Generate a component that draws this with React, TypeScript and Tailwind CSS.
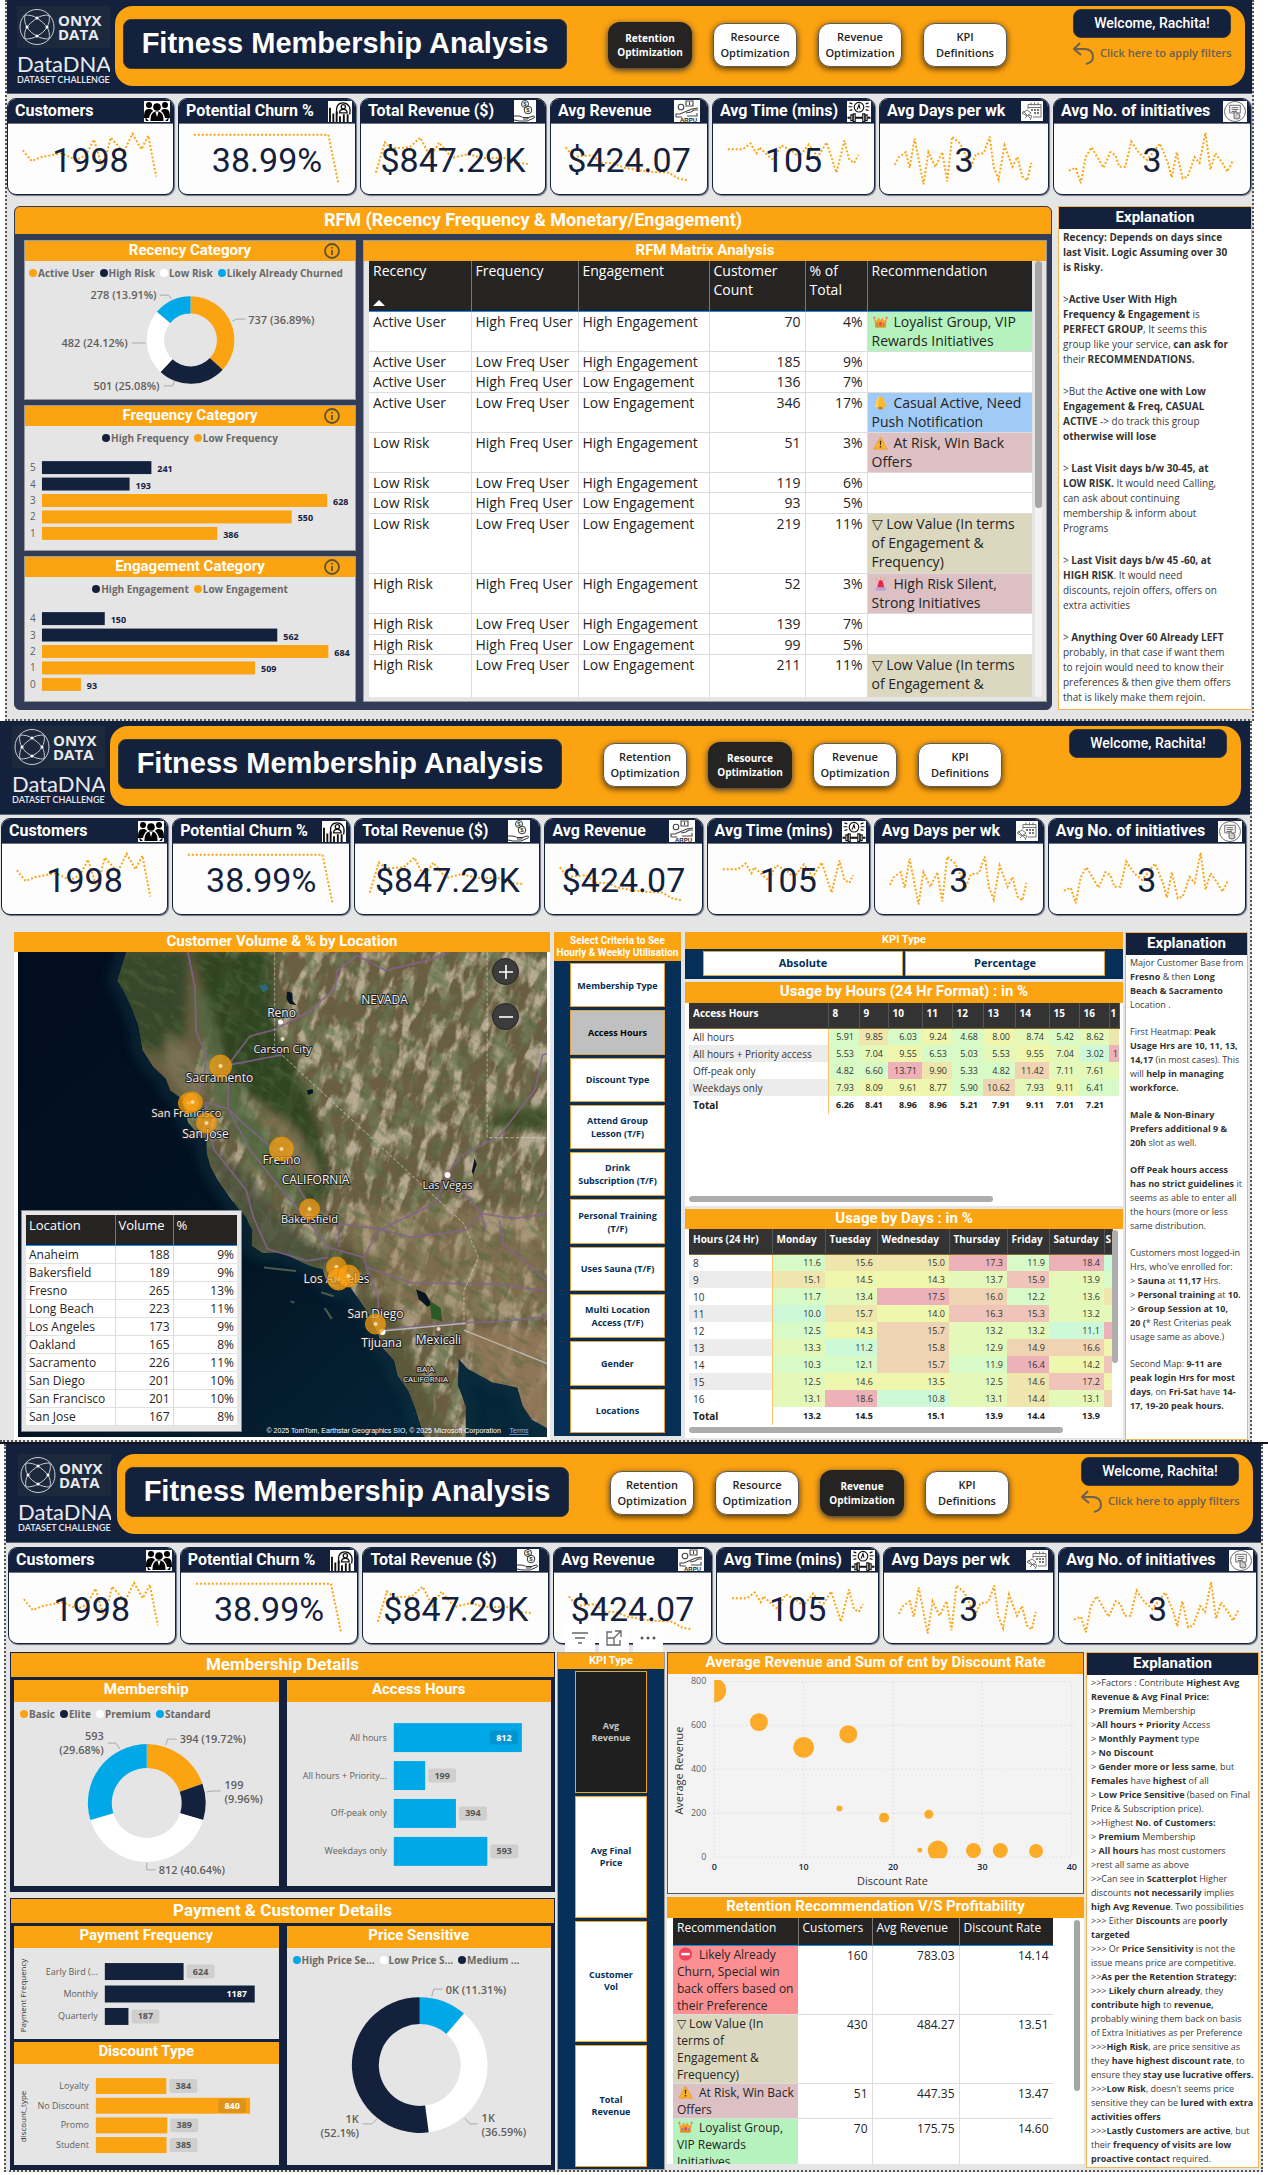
import React from "react";

/* ---------- shared text helpers ---------- */

function Rich({ text }: { text: string }) {
  return (
    <>
      {text.split("**").map((part, i) =>
        i % 2 ? (
          <b key={i} className="font-bold text-[#333]">
            {part}
          </b>
        ) : (
          <React.Fragment key={i}>{part}</React.Fragment>
        )
      )}
    </>
  );
}

function Lines({ blocks, className }: { blocks: string[][]; className: string }) {
  return (
    <div className={"flex flex-col whitespace-nowrap text-[#3a3a3a] " + className}>
      {blocks.map((b, i) => (
        <p key={i}>
          {b.map((l, j) => (
            <React.Fragment key={j}>
              <Rich text={l} />
              <br />
            </React.Fragment>
          ))}
        </p>
      ))}
    </div>
  );
}

function Explanation({ children, className = "" }: { children: React.ReactNode; className?: string }) {
  return (
    <aside className={"overflow-hidden border border-[#f5b553] bg-white " + className}>
      <h3 className="h-[22px] bg-[#14213d] text-center font-[Roboto] text-[15px] leading-[20px] font-bold text-white">
        Explanation
      </h3>
      {children}
    </aside>
  );
}

/* ---------- header ---------- */

function Logo() {
  return (
    <div className="w-[93px] shrink-0 overflow-hidden text-[#e8eaf0]">
      <div className="flex h-[42px] items-center gap-[3px] bg-[#1c283c] pl-[2px]">
        <svg viewBox="0 0 36 38" className="h-[38px] w-9 shrink-0" fill="none" stroke="#c9ced8" strokeWidth="1">
          <ellipse cx="18" cy="19" rx="17" ry="17.5" />
          <path d="M18 10C14 13 10 16 8 19c2 4 6 7 10 9 4-2 8-5 10-9-2-3-6-6-10-9z" />
          <path d="M6 7c5 0 9 1 12 3 3-2 7-3 12-3M6 31c5 0 9-1 12-3 3 2 7 3 12 3M6 7c-1 5 0 9 2 12-2 3-3 7-2 12M30 7c1 5 0 9-2 12 2 3 3 7 2 12" />
          <g fill="#fff" stroke="none">
            <circle cx="18" cy="10" r="1.5" />
            <circle cx="8" cy="19" r="1.5" />
            <circle cx="28" cy="19" r="1.5" />
            <circle cx="18" cy="28" r="1.5" />
          </g>
        </svg>
        <div className="font-['Open_Sans'] text-[15px] font-bold">
          <div className="h-[14px] leading-[14px]">ONYX</div>
          <div className="h-[14px] leading-[14px]">DATA</div>
        </div>
      </div>
      <div className="mt-[6px] font-[Lato] text-[22px] leading-[20px]">DataDNA</div>
      <div className="mt-[1px] font-[Lato] text-[9px] leading-[10px] font-semibold whitespace-nowrap">
        DATASET CHALLENGE
      </div>
    </div>
  );
}

const NAV = [
  ["Retention", "Optimization"],
  ["Resource", "Optimization"],
  ["Revenue", "Optimization"],
  ["KPI", "Definitions"],
];

function Header({
  active,
  filters = false,
  className,
  logoClass,
}: {
  active: number;
  filters?: boolean;
  className: string;
  logoClass: string;
}) {
  return (
    <header className={"flex border-b border-[#5a6478] bg-[#14213d] " + className}>
      <div className={"shrink-0 " + logoClass}>
        <Logo />
      </div>
      <div className="flex h-20 min-w-0 flex-1 rounded-[18px] bg-[#fca311] pl-2">
        <h1 className="mt-[13px] flex h-[50px] w-[444px] shrink-0 items-center justify-center rounded-lg border border-[#3b3a33] bg-[#14213d] font-['Liberation_Sans'] text-[29px] font-bold whitespace-nowrap text-white">
          Fitness Membership Analysis
        </h1>
        <nav className="mt-[16px] ml-[41px] flex gap-[21px]">
          {NAV.map(([a, b], i) => (
            <button
              key={a}
              type="button"
              className={
                i === active
                  ? "h-[46px] w-[84px] rounded-xl bg-[#252423] font-['Open_Sans'] text-[10px] leading-[14px] font-bold text-white shadow-[0_2px_6px_rgba(20,33,61,0.9)]"
                  : "mt-px h-[44px] w-[84px] rounded-xl border border-[#5b5b5b] bg-white font-['Open_Sans'] text-[11px] leading-[16px] font-semibold text-[#252423] shadow-[0_2px_6px_rgba(0,0,0,0.7)]"
              }
            >
              {a}
              <br />
              {b}
            </button>
          ))}
        </nav>
        <div className="mt-[3px] mr-[14px] ml-auto flex w-[158px] flex-col">
          <div className="flex h-[29px] items-center justify-center rounded-lg border border-[#3b3a33] bg-[#14213d] font-[Roboto] text-[14px] font-medium text-white">
            Welcome, Rachita!
          </div>
          {filters && (
            <a
              href="#filters"
              className="mt-[4px] flex items-center gap-[5px] font-['Open_Sans'] text-[11px] font-semibold whitespace-nowrap text-[#6b6252]"
            >
              <svg viewBox="0 0 22 23" className="h-[23px] w-[22px] shrink-0" fill="none" stroke="#6b6252" strokeWidth="2">
                <path d="M7 1 1 7l7 6M1 7h10c6 0 9 3 9 8 0 4-3 6-7 7" />
              </svg>
              Click here to apply filters
            </a>
          )}
        </div>
      </div>
    </header>
  );
}

/* ---------- KPI cards ---------- */

const ICON = "h-[21px] w-[24px] shrink-0 bg-white";

function PeopleIcon() {
  return (
    <svg viewBox="0 0 26 21" className="h-[21px] w-[26px] shrink-0 bg-white" fill="#000">
      <circle cx="13" cy="6" r="3.800" />
      <circle cx="5" cy="4" r="3" />
      <circle cx="21" cy="4" r="3" />
      <path d="M6.500 20c0-7 2-9.500 6.500-9.500S19.500 13 19.500 20z" />
      <path d="M0 17c0-6 1-9 5-9 2 0 3 .5 4 2-2 1.500-3.500 4-4 7zM26 17c0-6-1-9-5-9-2 0-3 .5-4 2 2 1.500 3.500 4 4 7z" />
      <path d="M1 16l4 4H2zM25 16l-4 4h3z" />
      <path d="M11.500 11l1.500 5 1.500-5z" fill="#fff" />
    </svg>
  );
}
function ChurnIcon() {
  return (
    <svg viewBox="0 0 24 22" className={ICON} fill="none" stroke="#111" strokeWidth="1.4">
      <path d="M1.500 7v15M5 13v9M8.500 11v11M12 16v6M16 14v8M20 14v8" strokeWidth="2" />
      <path d="M9 14c-2-8 1-12 6-12s9 4 7 12" />
      <circle cx="15.500" cy="6" r="2.200" />
      <path d="M11.500 12.500c0-5 8-5 8 0z" />
    </svg>
  );
}
function CoinsIcon() {
  return (
    <svg viewBox="0 0 22 22" className="mr-[6px] h-[22px] w-[22px] shrink-0 bg-white" fill="none" stroke="#333" strokeWidth="1">
      <circle cx="11" cy="4" r="3.500" />
      <circle cx="14" cy="10" r="3.800" />
      <g fill="#333" stroke="none" fontFamily="Liberation Sans" fontSize="6" fontWeight="700" textAnchor="middle">
        <text x="11" y="6">$</text>
        <text x="14" y="12">$</text>
      </g>
      <path d="M0 16h4c3 0 4 1.500 6 1.500h3c1.500 0 1.500 1.500 0 1.500H9M13 18l6-2c2 0 2 1.500 1 2l-7 3H5l-5-1" />
    </svg>
  );
}
function ArpuIcon() {
  return (
    <svg viewBox="0 0 26 22" className="mr-[4px] h-[22px] w-[26px] shrink-0 bg-white" fill="none" stroke="#444" strokeWidth="1.1">
      <circle cx="7" cy="7" r="2.800" />
      <path d="M2 17v-3h4l7-3 5-2 6-1M12 13l5-1 3-2h4M12 1h7v5h-7zM15.500 2v3M2 17h6M13 16h10v-3" />
      <text x="6" y="22" fontSize="6" fontFamily="Liberation Sans" fontWeight="700" fill="#222" stroke="none">
        ARPU
      </text>
    </svg>
  );
}
function TimeIcon() {
  return (
    <svg viewBox="0 0 24 22" className={ICON} fill="none" stroke="#111" strokeWidth="1.2">
      <circle cx="12" cy="6.500" r="5" />
      <path d="M10 9l2-5 1 4M2 2l3 1M22 2l-3 1M1 6h4M23 6h-4M2 10l3-1M22 10l-3-1" />
      <path d="M8 17.500h8M0 17.500h3M21 17.500h3" strokeWidth="2" />
      <path d="M3.500 14.500h2v6h-2zM6 13.500h2v8h-2zM16 13.500h2v8h-2zM18.500 14.500h2v6h-2z" />
    </svg>
  );
}
function DaysIcon() {
  return (
    <svg viewBox="0 0 22 20" className="mr-[2px] h-5 w-[22px] shrink-0 bg-white" fill="none" stroke="#777" strokeWidth="1">
      <path d="M7 8V3.500h13V16H12M7 6.500h13M10 1.500v3M13.500 1.500v3M17 1.500v3" />
      <path d="M10 9h2M13 9h2M16 9h2M13 12h2M16 12h2" strokeWidth="2" />
      <path d="M1 12l5-3 4 3-4 3zM4 17l3-3 4 1-2 4M2 10l8 8" />
    </svg>
  );
}
function InitiativeIcon() {
  return (
    <svg viewBox="0 0 24 22" className={ICON} fill="none" stroke="#666" strokeWidth="1">
      <ellipse cx="12" cy="11" rx="11" ry="10.500" />
      <path d="M6.500 4.500h11v8h-11zM8.500 7h7M8.500 9h7M8.500 11h4" />
      <path d="M11 13v5l3 1 3-1v-4l-3-1-1-3z" fill="#ccc" />
    </svg>
  );
}

const CARDS: { title: string; value: string; w: number; pts: string; icon: React.ReactNode }[] = [
  {
    title: "Customers",
    value: "1998",
    w: 167,
    pts: "15,27 24,38 34,34 54,30 69,37 79,32 87,16 96,46 104,14 117,29 126,10 135,26 142,12 150,54",
    icon: <PeopleIcon />,
  },
  { title: "Potential Churn %", value: "38.99%", w: 178, pts: "15,11 151,11 161,60", icon: <ChurnIcon /> },
  {
    title: "Total Revenue ($)",
    value: "$847.29K",
    w: 186,
    pts: "15,50 24,19 31,25 49,24 60,14 70,34 79,19 92,35 108,31 123,35 145,35 155,40 169,41",
    icon: <CoinsIcon />,
  },
  {
    title: "Avg Revenue",
    value: "$424.07",
    w: 158,
    pts: "15,24 23,34 42,32 50,40 62,40 74,45 98,49 119,50 129,56 139,58",
    icon: <ArpuIcon />,
  },
  {
    title: "Avg Time (mins)",
    value: "105",
    w: 163,
    pts: "15,26 30,26 38,20 44,30 47,24 55,32 61,37 69,22 79,27 87,34 97,21 106,34 115,19 125,50 133,17 138,37 143,40 147,32",
    icon: <TimeIcon />,
  },
  {
    title: "Avg Days per wk",
    value: "3",
    w: 170,
    pts: "15,42 19,34 26,29 30,45 35,15 44,62 49,29 56,44 63,29 68,59 73,13 81,20 92,44 97,31 105,30 111,13 115,44 120,57 126,22 134,44 139,34 144,54 149,58 153,40",
    icon: <DaysIcon />,
  },
  {
    title: "Avg No. of initiatives",
    value: "3",
    w: 198,
    pts: "15,48 22,45 27,61 32,34 38,24 50,45 57,29 62,32 66,44 72,44 78,18 86,30 94,37 107,20 115,40 119,55 124,29 130,56 135,54 142,34 147,40 153,9 158,47 163,30 170,40 175,49 181,37",
    icon: <InitiativeIcon />,
  },
];

function KpiRow({ className, toolbar = false }: { className: string; toolbar?: boolean }) {
  return (
    <section
      className={"grid grid-cols-[167fr_178fr_186fr_158fr_163fr_170fr_198fr] gap-1 " + className}
    >
      {CARDS.map((c, i) => (
        <article
          key={c.title}
          className="relative h-[97px] rounded-[9px] border border-[#14213d] bg-[#fdfdfd] shadow-[1px_1px_1px_rgba(20,33,61,0.6)]"
        >
          <div className="flex h-[25px] items-center justify-between rounded-t-[8px] border-b border-[#6d7486] bg-[#14213d] pr-[3px] pl-[7px]">
            <h2 className="font-[Roboto] text-[16px] leading-[22px] font-bold whitespace-nowrap text-white">{c.title}</h2>
            {c.icon}
          </div>
          <div className="grid h-[70px]">
            <svg
              viewBox={`0 0 ${c.w} 72`}
              preserveAspectRatio="none"
              className="h-[70px] w-full [grid-area:1/1]"
              fill="none"
              stroke="#fca311"
              strokeWidth="2"
              strokeDasharray="2 2"
            >
              <polyline points={c.pts} />
            </svg>
            <div className="z-10 text-center font-[Roboto] text-[34px] leading-[72px] whitespace-nowrap text-[#14213d] [grid-area:1/1]">
              {c.value}
            </div>
          </div>
          {toolbar && i === 3 && (
            <div className="absolute top-[76px] left-[11px] z-20 flex gap-1">
              <button type="button" aria-label="Filters" className="flex h-[28px] w-[30px] items-center justify-center bg-white">
                <svg viewBox="0 0 16 12" className="h-3 w-4" stroke="#666" strokeWidth="1.4">
                  <path d="M0 1h16M3 6h10M6 11h4" />
                </svg>
              </button>
              <button type="button" aria-label="Focus mode" className="flex h-[28px] w-[30px] items-center justify-center bg-white">
                <svg viewBox="0 0 16 16" className="h-4 w-4" fill="none" stroke="#666" strokeWidth="1.3">
                  <path d="M6 2H1v13h13v-5M9 1h6v6M15 1 8 8M1 8h7v7" />
                </svg>
              </button>
              <button type="button" aria-label="More options" className="flex h-[28px] w-[30px] items-center justify-center bg-white">
                <svg viewBox="0 0 16 4" className="h-1 w-4" fill="#555">
                  <circle cx="2" cy="2" r="1.500" />
                  <circle cx="8" cy="2" r="1.500" />
                  <circle cx="14" cy="2" r="1.500" />
                </svg>
              </button>
            </div>
          )}
        </article>
      ))}
    </section>
  );
}

/* ---------- chart parts ---------- */

const ORANGE = "#fca311";
const NAVY = "#14213d";
const WHITE = "#ffffff";
const BLUE = "#00a8e8";

function Donut({ cx, cy, r, inner, parts }: { cx: number; cy: number; r: number; inner: number; parts: [number, string][] }) {
  let start = 0;
  return (
    <g>
      {parts.map(([pct, color], i) => {
        const a0 = (start / 100) * Math.PI * 2;
        start += pct;
        const a1 = (start / 100) * Math.PI * 2;
        const p = (a: number, rad: number) => `${cx + rad * Math.sin(a)} ${cy - rad * Math.cos(a)}`;
        const large = pct > 50 ? 1 : 0;
        return (
          <path
            key={i}
            fill={color}
            d={`M${p(a0, r)}A${r} ${r} 0 ${large} 1 ${p(a1, r)}L${p(a1, inner)}A${inner} ${inner} 0 ${large} 0 ${p(a0, inner)}Z`}
          />
        );
      })}
    </g>
  );
}

function Legend({ items, className }: { items: [string, string][]; className: string }) {
  return (
    <ul
      className={
        "flex h-6 items-center gap-[5px] font-['Open_Sans'] text-[10px] font-bold whitespace-nowrap text-[#6b6967] " + className
      }
    >
      {items.map(([label, dot]) => (
        <li key={label} className="flex items-center gap-[1px]">
          <span className={"h-2 w-2 rounded-full " + dot} />
          {label}
        </li>
      ))}
    </ul>
  );
}

function CardTitle({ children, info = false, className = "" }: { children: React.ReactNode; info?: boolean; className?: string }) {
  return (
    <h3 className={"relative bg-[#fca311] text-center font-[Roboto] text-[15px] leading-[19px] font-bold text-white " + className}>
      {children}
      {info && (
        <button type="button" aria-label="Information" className="absolute top-[2px] right-[15px]">
          <svg viewBox="0 0 16 16" className="h-4 w-4" fill="none" stroke="#5d5436" strokeWidth="1.800">
            <circle cx="8" cy="8" r="7" />
            <path d="M8 7v5M8 4v1.600" />
          </svg>
        </button>
      )}
    </h3>
  );
}

function CategoryBars({ rows, scale }: { rows: [string, number, string][]; scale: number }) {
  return (
    <svg viewBox="0 0 331 101" className="h-[101px] w-full" fontFamily="Open Sans" fontSize="10">
      {rows.map(([label, v, color], i) => {
        const y = 11 + i * 16.5;
        return (
          <g key={label}>
            <text x="5" y={y + 10} fill="#605e5c">
              {label}
            </text>
            <rect x="17" y={y} width={v * scale} height="13" fill={color} />
            <text x={17 + v * scale + 6} y={y + 11} fill={NAVY} fontSize="9" fontWeight="700">
              {v}
            </text>
          </g>
        );
      })}
    </svg>
  );
}

function LabelBars({
  rows,
  w,
  h,
  x,
  top,
  pitch,
  bar,
  scale,
  color,
  insideFill,
  axis,
  className,
}: {
  rows: [string, number][];
  w: number;
  h: number;
  x: number;
  top: number;
  pitch: number;
  bar: number;
  scale: number;
  color: string;
  insideFill: string;
  axis?: string;
  className: string;
}) {
  const max = Math.max(...rows.map((r) => r[1]));
  return (
    <svg viewBox={`0 0 ${w} ${h}`} className={"w-full " + className} fontFamily="Open Sans" fontSize="9">
      {axis && (
        <text transform={`translate(12 ${h / 2 + 2}) rotate(-90)`} textAnchor="middle" fontSize="8" fill="#333">
          {axis}
        </text>
      )}
      {rows.map(([label, v], i) => {
        const y = top + i * pitch;
        const end = x + v * scale;
        const inside = v === max;
        const bx = inside ? end - 32 : end + 3;
        const mid = y + bar / 2;
        return (
          <g key={label}>
            <text x={x - 7} y={mid + 3} textAnchor="end" fill="#605e5c">
              {label}
            </text>
            <rect x={x} y={y} width={v * scale} height={bar} fill={color} />
            <rect x={bx} y={mid - 7} width="28" height="14" rx="2" fill={inside ? insideFill : "#d0cfce"} />
            <text x={bx + 14} y={mid + 3} textAnchor="middle" fontWeight="700" fill={inside ? "#fff" : "#555"}>
              {v}
            </text>
          </g>
        );
      })}
    </svg>
  );
}

/* ---------- small pictograms in the recommendation cells ---------- */

const PIC = "mr-[6px] ml-[1px] inline-block h-[14px] w-[15px] align-[-2px]";

function Crown() {
  return (
    <svg viewBox="0 0 16 14" className={PIC}>
      <path d="M1 3l3 3 2-4 2 3 2-3 2 4 3-3-1.500 9h-11z" fill="#f4a02c" />
      <path d="M2.500 10h11v3h-11z" fill="#e58a1f" />
      <circle cx="8" cy="8.500" r="1.600" fill="#e8415a" />
      <circle cx="4.500" cy="9" r="1" fill="#5c8fe6" />
      <circle cx="11.500" cy="9" r="1" fill="#5c8fe6" />
      <circle cx="1.500" cy="2.500" r="1.200" fill="#f06a6a" />
      <circle cx="14.500" cy="2.500" r="1.200" fill="#f06a6a" />
    </svg>
  );
}
function Bell() {
  return (
    <svg viewBox="0 0 16 14" className={PIC}>
      <path d="M8 0c-4 0-4 4-4.500 7L1.500 11.500h13L12.500 7C12 4 12 0 8 0z" fill="#fbb829" />
      <path d="M8 0C6 1 6 6 5 11.500H1.500L3.500 7C4 4 4 0 8 0z" fill="#ffd15c" />
      <ellipse cx="8" cy="12.500" rx="2.500" ry="1.500" fill="#c77f1a" />
    </svg>
  );
}
function Warning() {
  return (
    <svg viewBox="0 0 16 14" className={PIC}>
      <path d="M8 .8 15.200 13.500H.8z" fill="#fcb42c" stroke="#f0a020" strokeLinejoin="round" />
      <path d="M7.200 4.500h1.600L8.500 9h-1zM7.200 10.200h1.600v1.600H7.200z" fill="#3a2c18" />
    </svg>
  );
}
function Siren() {
  return (
    <svg viewBox="0 0 16 14" className={PIC}>
      <path d="M4.500 11 6 4.500c.5-2 4-2 4.500 0L12 11z" fill="#e8264a" />
      <path d="M3 10.500h10.500V14H3z" fill="#b6a3d6" />
      <path d="M3 1l1.500 2M8 0v1.500M13 1l-1.500 2" stroke="#f58a4a" />
    </svg>
  );
}
function NoEntry() {
  return (
    <svg viewBox="0 0 16 14" className={PIC}>
      <circle cx="8" cy="7" r="7" fill="#f0425c" />
      <path d="M3.500 5.800h9v2.600h-9z" fill="#fff" />
    </svg>
  );
}

const GREEN_CELL = "bg-[#b5f2bd]";
const BLUE_CELL = "bg-[#a0cbf7]";
const PINK_CELL = "bg-[#dcc0c3]";
const SAND_CELL = "bg-[#dcd8c0]";

/* ---------- page 1 : retention ---------- */

const RFM: { c: string[]; cell?: string; rec?: React.ReactNode; h: string }[] = [
  { c: ["Active User", "High Freq User", "High Engagement", "70", "4%"], cell: GREEN_CELL, rec: <><Crown />Loyalist Group, VIP<br />Rewards Initiatives</>, h: "h-[40px]" },
  { c: ["Active User", "Low Freq User", "High Engagement", "185", "9%"], h: "h-[20px]" },
  { c: ["Active User", "High Freq User", "Low Engagement", "136", "7%"], h: "h-[21px]" },
  { c: ["Active User", "Low Freq User", "Low Engagement", "346", "17%"], cell: BLUE_CELL, rec: <><Bell />Casual Active, Need<br />Push Notification</>, h: "h-[40px]" },
  { c: ["Low Risk", "High Freq User", "High Engagement", "51", "3%"], cell: PINK_CELL, rec: <><Warning />At Risk, Win Back<br />Offers</>, h: "h-[40px]" },
  { c: ["Low Risk", "Low Freq User", "High Engagement", "119", "6%"], h: "h-[20px]" },
  { c: ["Low Risk", "High Freq User", "Low Engagement", "93", "5%"], h: "h-[21px]" },
  { c: ["Low Risk", "Low Freq User", "Low Engagement", "219", "11%"], cell: SAND_CELL, rec: <>▽ Low Value (In terms<br />of Engagement &amp;<br />Frequency)</>, h: "h-[60px]" },
  { c: ["High Risk", "High Freq User", "High Engagement", "52", "3%"], cell: PINK_CELL, rec: <><Siren />High Risk Silent,<br />Strong Initiatives</>, h: "h-[40px]" },
  { c: ["High Risk", "Low Freq User", "High Engagement", "139", "7%"], h: "h-[21px]" },
  { c: ["High Risk", "High Freq User", "Low Engagement", "99", "5%"], h: "h-[20px]" },
  { c: ["High Risk", "Low Freq User", "Low Engagement", "211", "11%"], cell: SAND_CELL, rec: <>▽ Low Value (In terms<br />of Engagement &amp;</>, h: "h-[43px]" },
];

function RfmTable() {
  return (
    <table className="w-full table-fixed border-collapse bg-white text-left font-['Open_Sans'] text-[14px] leading-[19px] whitespace-nowrap text-[#252423]">
      <colgroup>
        <col className="w-[102px]" />
        <col className="w-[107px]" />
        <col className="w-[131px]" />
        <col className="w-[96px]" />
        <col className="w-[62px]" />
        <col className="w-[167px]" />
      </colgroup>
      <thead>
        <tr className="h-[50px] border-b border-[#118dff] bg-[#252423] align-top text-white">
          {["Recency", "Frequency", "Engagement", "Customer|Count", "% of|Total", "Recommendation"].map((h, i) => (
            <th key={h} scope="col" className="border-r border-[#777] px-1 font-normal">
              {h.split("|")[0]}
              {h.includes("|") && <br />}
              {h.split("|")[1]}
              {i === 0 && (
                <svg viewBox="0 0 12 6" className="mt-[20px] h-[6px] w-3" fill="#fff">
                  <path d="M6 0l6 6H0z" />
                </svg>
              )}
            </th>
          ))}
        </tr>
      </thead>
      <tbody>
        {RFM.map((r, i) => (
          <tr key={i} className={"border-b border-[#dcdcdc] align-top " + r.h}>
            {r.c.map((t, j) => (
              <td key={j} className={"border-r border-[#dcdcdc] px-1 " + (j > 2 ? "text-right" : "")}>
                {t}
              </td>
            ))}
            <td className={"px-1 " + (r.cell ?? "")}>{r.rec}</td>
          </tr>
        ))}
      </tbody>
    </table>
  );
}

const EXPLAIN_1 = [
  ["**Recency: Depends on days since**", "**last Visit. Logic Assuming over 30**", "**is Risky.**"],
  [">**Active User With High**", "**Frequency & Engagement** is", "**PERFECT GROUP**, It seems this", "group like your service, **can ask for**", "their **RECOMMENDATIONS.**"],
  [">But the **Active one with Low**", "**Engagement & Freq, CASUAL**", "**ACTIVE** -> do track this group", "**otherwise will lose**"],
  ["> **Last Visit days b/w 30-45, at**", "**LOW RISK.** It would need Calling,", "can ask about continuing", "membership & inform about", "Programs"],
  ["> **Last Visit days b/w 45 -60, at**", "**HIGH RISK**. It would need", "discounts, rejoin offers, offers on", "extra activities"],
  ["> **Anything Over 60 Already LEFT**", "probably, in that case if want them", "to rejoin would need to know their", "preferences & then give them offers", "that is likely make them rejoin."],
];

function RetentionPage() {
  return (
    <section className="mr-[14px] ml-[5px] border-r-2 border-b-2 border-l-2 border-dotted border-[#555] bg-[#e5e5e5] pb-[9px]">
      <Header active={0} filters className="pt-[6px] pr-[7px] pb-[7px]" logoClass="w-[108px] pl-[10px]" />
      <KpiRow className="mt-[4px] mr-px" />
      <div className="mt-[11px] flex h-[504px] gap-[6px] pl-[7px]">
        <div className="flex min-w-0 flex-1 flex-col overflow-hidden rounded-md border border-[#323c56] bg-[#323c56]">
          <h2 className="h-[27px] bg-[#fca311] text-center font-[Roboto] text-[18px] leading-[26px] font-bold text-white">
            RFM (Recency Frequency &amp; Monetary/Engagement)
          </h2>
          <div className="mt-[6px] grid grid-cols-[332px_1fr] gap-[7px] pr-[4px] pl-[9px]">
            <div className="flex flex-col gap-[5px]">
              <div className="h-[160px] border border-[#9a9a9a] bg-[#e5e5e5]">
                <CardTitle info className="h-5">Recency Category</CardTitle>
                <Legend
                  className="pl-[4px]"
                  items={[["Active User", "bg-[#fca311]"], ["High Risk", "bg-[#14213d]"], ["Low Risk", "bg-white"], ["Likely Already Churned", "bg-[#00a8e8]"]]}
                />
                <svg viewBox="0 24 331 114" className="h-[114px] w-full" fontFamily="Open Sans" fontSize="11" fontWeight="600" fill="#605e5c">
                  <Donut cx={166} cy={79} r={44} inner={26.5} parts={[[36.89, ORANGE], [25.08, NAVY], [24.12, WHITE], [13.91, BLUE]]} />
                  <path d="M135 34h9l3 4M208 60l4-2h9M107 82h14M139 125h9l2-5" fill="none" stroke="#aaa" />
                  <text x="132" y="38" textAnchor="end">278 (13.91%)</text>
                  <text x="224" y="63">737 (36.89%)</text>
                  <text x="103" y="86" textAnchor="end">482 (24.12%)</text>
                  <text x="135" y="129" textAnchor="end">501 (25.08%)</text>
                </svg>
              </div>
              <div className="h-[146px] border border-[#9a9a9a] bg-[#e5e5e5]">
                <CardTitle info className="h-5">Frequency Category</CardTitle>
                <Legend className="justify-center" items={[["High Frequency", "bg-[#14213d]"], ["Low Frequency", "bg-[#fca311]"]]} />
                <CategoryBars scale={0.4555} rows={[["5", 241, NAVY], ["4", 193, NAVY], ["3", 628, ORANGE], ["2", 550, ORANGE], ["1", 386, ORANGE]]} />
              </div>
              <div className="h-[146px] border border-[#9a9a9a] bg-[#e5e5e5]">
                <CardTitle info className="h-5">Engagement Category</CardTitle>
                <Legend className="justify-center" items={[["High Engagement", "bg-[#14213d]"], ["Low Engagement", "bg-[#fca311]"]]} />
                <CategoryBars scale={0.42} rows={[["4", 150, NAVY], ["3", 562, NAVY], ["2", 684, ORANGE], ["1", 509, ORANGE], ["0", 93, ORANGE]]} />
              </div>
            </div>
            <div className="h-[462px] min-w-0 border border-[#9a9a9a] bg-[#e5e5e5]">
              <CardTitle className="h-5">RFM Matrix Analysis</CardTitle>
              <div className="flex h-[436px] gap-[3px] pr-[4px] pl-[5px]">
                <div className="min-w-0 flex-1 overflow-hidden">
                  <RfmTable />
                </div>
                <div className="w-[7px] rounded bg-[#f2f2f2]">
                  <div className="h-[247px] rounded bg-[#a6a6a6]" />
                </div>
              </div>
            </div>
          </div>
        </div>
        <Explanation className="w-[194px] shrink-0">
          <Lines className="gap-[17px] px-[4px] pt-[1px] font-['Open_Sans'] text-[10px] leading-[15px]" blocks={EXPLAIN_1} />
        </Explanation>
      </div>
    </section>
  );
}

/* ---------- page 2 : resources ---------- */

const PLACES: [string, number, number, number][] = [
  ["NEVADA", 367, 52, 12],
  ["Reno", 264, 65, 12],
  ["Carson City", 265, 101, 11],
  ["Sacramento", 202, 130, 12],
  ["San Francisco", 169, 165, 11],
  ["San Jose", 188, 186, 12],
  ["Fresno", 264, 212, 12],
  ["CALIFORNIA", 298, 232, 12],
  ["Las Vegas", 430, 237, 11],
  ["Bakersfield", 292, 271, 11],
  ["Los Angeles", 319, 331, 12],
  ["San Diego", 358, 366, 12],
  ["Tijuana", 364, 395, 12],
  ["Mexicali", 421, 392, 12],
  ["BAJA", 408, 420, 8],
  ["CALIFORNIA", 408, 430, 8],
];

const BUBBLES: [number, number, number][] = [
  [203, 114, 11], [171, 151, 10], [175, 150, 10], [189, 171, 10], [264, 197, 12],
  [292, 257, 10], [319, 315, 10], [321, 327, 11], [331, 324, 11], [358, 372, 10],
];

const LAND =
  "M355 95 330 180 350 215 372 265 388 310 395 350 400 385 430 435 465 470 478 505 510 530 520 570 528 600 560 640 580 650 580 690 590 730 610 770 640 815 665 850 690 880 708 920 706 965 735 985 790 985 830 1005 870 1025 905 1035 915 1075 945 1095 980 1085 1010 1130 1035 1170 1060 1225 1075 1270 1105 1305 1115 1350 1145 1395 1165 1450 1190 1535 1305 1535 1305 1440 1283 1380 1285 1300 1310 1330 1380 1370 1450 1385 1465 1440 1490 1480 1540 1510V90H355Z";

function CoastMap() {
  return (
    <svg viewBox="0 0 530 485" preserveAspectRatio="xMidYMid slice" className="h-[485px] w-full" role="img" aria-label="Satellite map of California and Nevada">
      <defs>
        <filter id="soft" x="-20%" y="-20%" width="140%" height="140%">
          <feGaussianBlur stdDeviation="14" />
        </filter>
        <filter id="light" x="0" y="0" width="100%" height="100%">
          <feTurbulence type="fractalNoise" baseFrequency="0.03 0.012" numOctaves="5" seed="8" />
          <feColorMatrix values="0 0 0 0 .68  0 0 0 0 .6  0 0 0 0 .47  5 0 0 0 -2.300" />
        </filter>
        <filter id="dark" x="0" y="0" width="100%" height="100%">
          <feTurbulence type="fractalNoise" baseFrequency="0.028 0.012" numOctaves="5" seed="21" />
          <feColorMatrix values="0 0 0 0 .16  0 0 0 0 .19  0 0 0 0 .09  0 5 0 0 -2.400" />
        </filter>
        <filter id="grain" x="0" y="0" width="100%" height="100%">
          <feTurbulence type="fractalNoise" baseFrequency="0.02 0.05" numOctaves="4" seed="3" />
          <feColorMatrix values="0 0 0 0 .08  0 0 0 0 .14  0 0 0 0 .05  0 4 0 0 -2" />
        </filter>
        <clipPath id="land">
          <path d={LAND} />
        </clipPath>
        <linearGradient id="deep" x1="0" y1="0" x2="1" y2="1">
          <stop offset="0" stopColor="#020d1f" />
          <stop offset="0.450" stopColor="#021222" />
          <stop offset="1" stopColor="#06293c" />
        </linearGradient>
      </defs>
      <svg x="0" y="0" width="530" height="485" viewBox="50 95 1484 1437" preserveAspectRatio="none">
        <rect x="50" y="95" width="1484" height="1437" fill="url(#deep)" />
        <path d={LAND} fill="none" stroke="#0a3040" strokeWidth="60" opacity="0.500" filter="url(#soft)" />
        <g clipPath="url(#land)">
          <rect x="300" y="90" width="1240" height="1450" fill="#6b5e42" />
          <g transform="rotate(14 1000 700)">
            <rect x="500" y="-300" width="1300" height="2100" filter="url(#light)" opacity="0.700" />
            <rect x="500" y="-300" width="1300" height="2100" filter="url(#dark)" opacity="0.750" />
          </g>
          <g filter="url(#soft)" opacity="0.850">
            <path d="M300 90h230l-10 250-60 60-150-60z" fill="#2f4427" />
            <path d="M540 90h220l10 220 60 120 60 180 40 180-60 60-100-220-110-160-50-100z" fill="#263f1c" />
            <path d="M540 200 585 230 620 400 700 560 800 700 850 830 830 850 700 700 620 560 580 450z" fill="#526b42" />
            <path d="M470 330 540 400 580 500 540 560 460 430z" fill="#7d7557" />
            <path d="M560 640 700 760 780 880 900 980 1010 1010 880 1040 700 980z" fill="#48503a" />
            <path d="M690 520 830 620 900 760 860 790 760 640z" fill="#7d6f50" />
            <path d="M1000 1100 1100 1120 1150 1280 1250 1530 1150 1530z" fill="#5a5738" />
            <path d="M1280 1210h260v330l-180-170z" fill="#94795a" />
            <path d="M1420 560h120v60h-200z" fill="#344822" />
            <path d="M940 980 1070 1000 1060 1060 940 1030z" fill="#3d4428" />
          </g>
          <g filter="url(#soft)" opacity="0.450">
            <path d="M950 850h580v320l-400 30-100-150z" fill="#957e5c" />
          </g>
          <g transform="rotate(35 700 600)">
            <rect x="-100" y="-300" width="1900" height="2300" filter="url(#grain)" opacity="0.450" />
          </g>
        </g>
        <g fill="#071520">
          <path d="M805 212l14 4 2 25 10 12-20-5-8-15z" />
          <path d="M1166 1094l26 12 18 32-12 8-24-22z" />
          <path d="M1330 705l6 20-10 30-4-10z" />
          <path d="M860 505l16-4 2 12-14 6z" />
        </g>
        <path d="M1205 1130l30 20 4 40-30-10z" fill="#2c5a24" />
        <path d="M726 195l20-6 6 16-14 10z" fill="#2a6a7a" />
        <path d="M900 1103l35 12M910 1150l20 32M740 1030l90 10M815 1130l10 4" stroke="#4d5a48" strokeWidth="6" fill="none" />
        <g fill="none" stroke="#84638c" strokeWidth="5" strokeLinejoin="round" opacity="0.850">
          <path d="M527 95 547 200 550 330 578 400 572 480 540 530M640 430 700 345 770 325 870 270 940 200 945 150 1000 105 1080 150 1200 120 1260 95M640 430 790 400M575 540 640 560 700 680 790 800 870 900 920 970 1020 1000 1030 1040 1060 1120 1060 1200" />
          <path d="M640 460V560L690 610 810 720 840 800 870 850M575 540 600 680 690 800 710 880 750 975 860 1010 920 1000M950 970V900L1060 915 1150 940 1300 920 1350 870 1440 885 1534 870M1020 1000 1060 920 1220 840 1255 755 1290 700 1400 640 1500 500 1520 400 1534 395M1255 755 1350 870 1360 920M1030 1030 1150 1075 1400 1080 1534 1100M1070 1215 1240 1195 1400 1190 1534 1175M1400 890 1410 960 1534 1070" />
        </g>
        <g fill="none" stroke="#d5d5cc" strokeWidth="3" strokeDasharray="10 5" opacity="0.550">
          <path d="M770 95V380L1300 900 1340 1000 1300 1100V1200M1365 95V645H1534" />
        </g>
        <path d="M1070 1218 1305 1195M1300 1215 1534 1315" stroke="#c9c9c9" strokeWidth="4" opacity="0.800" />
      </svg>
      <g fill="#fff">
        <circle cx="263" cy="70" r="2.500" />
        <circle cx="265" cy="87" r="2" fill="#f6d0c0" />
        <circle cx="430" cy="223" r="3" />
        <circle cx="421" cy="377" r="2" fill="#f6d0c0" />
        <circle cx="365" cy="380" r="3" />
      </g>
      <g fontFamily="Open Sans" fill="#f2f2f2" stroke="#222" strokeWidth="2" paintOrder="stroke" textAnchor="middle">
        {PLACES.map(([n, x, y, s], i) => (
          <text key={i} x={x} y={y} fontSize={s}>
            {n}
          </text>
        ))}
      </g>
      {BUBBLES.map(([x, y, r], i) => (
        <g key={i}>
          <circle cx={x} cy={y} r={r} fill="#fca311" fillOpacity="0.700" stroke="#e08a00" />
          <circle cx={x} cy={y} r="2" fill="#ffd9a0" />
        </g>
      ))}
      <g fontFamily="Liberation Sans" fontSize="7">
        <text x="249" y="481" fill="#fff">
          © 2025 TomTom, Earthstar Geographics SIO, © 2025 Microsoft Corporation
        </text>
        <text x="492" y="481" fill="#8fb4ff" textDecoration="underline">
          Terms
        </text>
      </g>
    </svg>
  );
}

const LOCATIONS: [string, number, string][] = [
  ["Anaheim", 188, "9%"], ["Bakersfield", 189, "9%"], ["Fresno", 265, "13%"], ["Long Beach", 223, "11%"], ["Los Angeles", 173, "9%"],
  ["Oakland", 165, "8%"], ["Sacramento", 226, "11%"], ["San Diego", 201, "10%"], ["San Francisco", 201, "10%"], ["San Jose", 167, "8%"],
];

const CRITERIA = [
  ["Membership Type"], ["Access Hours"], ["Discount Type"], ["Attend Group", "Lesson (T/F)"], ["Drink", "Subscription (T/F)"],
  ["Personal Training", "(T/F)"], ["Uses Sauna (T/F)"], ["Multi Location", "Access (T/F)"], ["Gender"], ["Locations"],
];

/* Heat-map shades, from low (mint) to high (rose). */
const HEAT: Record<string, string> = {
  m: "bg-[#cdf9d9]",
  g: "bg-[#d8fac6]",
  l: "bg-[#e4f9b9]",
  y: "bg-[#eff7ae]",
  t: "bg-[#efe6ae]",
  o: "bg-[#efd3b2]",
  p: "bg-[#eec5b8]",
  r: "bg-[#ecb2b8]",
};

const HOURS: [string, string[], string][] = [
  ["All hours", ["5.91", "9.85", "6.03", "9.24", "4.68", "8.00", "8.74", "5.42", "8.62", ""], "gtgygylglt"],
  ["All hours + Priority access", ["5.53", "7.04", "9.55", "6.53", "5.03", "5.53", "9.55", "7.04", "3.02", "1"], "glygglylmr"],
  ["Off-peak only", ["4.82", "6.60", "13.71", "9.90", "5.33", "4.82", "11.42", "7.11", "7.61", ""], "ggrtggolll"],
  ["Weekdays only", ["7.93", "8.09", "9.61", "8.77", "5.90", "10.62", "7.93", "9.11", "6.41", ""], "lyyygolygg"],
];

const DAYS: [string, string[], string][] = [
  ["8", ["11.6", "15.6", "15.0", "17.3", "11.9", "18.4", ""], "gttrgrm"],
  ["9", ["15.1", "14.5", "14.3", "13.7", "15.9", "13.9", ""], "tyylplg"],
  ["10", ["11.7", "13.4", "17.5", "16.0", "12.2", "13.6", ""], "glroglt"],
  ["11", ["10.0", "15.7", "14.0", "16.3", "15.3", "13.2", ""], "mtyppll"],
  ["12", ["12.5", "14.3", "15.7", "13.2", "13.2", "11.1", ""], "gyollmr"],
  ["13", ["13.3", "11.2", "15.8", "12.9", "14.9", "16.6", ""], "lmolooy"],
  ["14", ["10.3", "12.1", "15.7", "11.9", "16.4", "14.2", ""], "ggogryp"],
  ["15", ["12.5", "14.6", "13.5", "12.5", "14.6", "17.2", ""], "lyyltpy"],
  ["16", ["13.1", "18.6", "10.8", "13.1", "14.4", "13.1", ""], "lrmltlo"],
];

function HeatTable({
  head,
  rows,
  total,
  cols,
  cellPad,
}: {
  head: string[];
  rows: [string, string[], string][];
  total: string[];
  cols: string[];
  cellPad: string;
}) {
  return (
    <table className="w-full table-fixed border-collapse text-right font-['Open_Sans'] text-[9px] leading-[16px] whitespace-nowrap text-[#333]">
      <colgroup>
        {cols.map((c, i) => (
          <col key={i} className={c} />
        ))}
      </colgroup>
      <thead>
        <tr className="h-[25px] border-b border-[#8a6a2c] bg-[#333] text-left align-top text-[10px] leading-[20px] text-white">
          {head.map((h, i) => (
            <th key={i} scope="col" className={"overflow-hidden border-r border-[#555] font-bold " + (i === head.length - 1 ? "pl-px" : "pl-1")}>
              {h}
            </th>
          ))}
        </tr>
      </thead>
      <tbody>
        {rows.map(([label, vals, heat], i) => (
          <tr key={label} className="h-[17px]">
            <th
              scope="row"
              className={"border-r border-[#fcc671] pl-1 text-left text-[10px] font-normal " + (i % 2 ? "bg-[#ececec]" : "bg-white")}
            >
              {label}
            </th>
            {vals.map((v, j) => (
              <td key={j} className={"overflow-hidden " + (j === vals.length - 1 ? "pr-px" : cellPad) + " " + HEAT[heat[j]]}>
                {v}
              </td>
            ))}
          </tr>
        ))}
        <tr className="h-[18px] font-bold text-[#222]">
          <th scope="row" className="border-r border-[#fcc671] pl-1 text-left text-[10px]">
            Total
          </th>
          {total.map((v, j) => (
            <td key={j} className={"overflow-hidden " + cellPad}>
              {v}
            </td>
          ))}
        </tr>
      </tbody>
    </table>
  );
}

const EXPLAIN_2 = [
  ["Major Customer Base from", "**Fresno** & then **Long**", "**Beach & Sacramento**", "Location ."],
  ["First Heatmap: **Peak**", "**Usage Hrs are 10, 11, 13,**", "**14,17** (in most cases). This", "will **help in managing**", "**workforce.**"],
  ["**Male & Non-Binary**", "**Prefers additional 9 &**", "**20h** slot as well."],
  ["**Off Peak hours access**", "**has no strict guidelines** it", "seems as able to enter all", "the hours (more or less", "same distribution."],
  ["Customers most logged-in", "Hrs, who've enrolled for:", "> **Sauna** at **11,17** Hrs.", "> **Personal training** at **10.**", "> **Group Session at 10,**", "**20 (*** Rest Criterias peak", "usage same as above.)"],
  ["Second Map: **9-11 are**", "**peak login Hrs for most**", "**days**, on **Fri-Sat** have **14-**", "**17, 19-20 peak hours.**"],
];

function ResourcePage() {
  return (
    <section className="mr-[16px] border-r-2 border-b-2 border-dotted border-[#555] bg-[#e5e5e5]">
      <Header active={1} className="pt-[5px] pr-[9px] pb-[8px]" logoClass="w-[110px] pl-[12px]" />
      <KpiRow className="mt-[3px] mr-[4px] ml-px" />
      <div className="mt-[17px] flex h-[508px] gap-[4px] pr-[2px] pl-[14px]">
        <div className="relative min-w-0 flex-1 bg-white">
          <CardTitle className="h-5">Customer Volume &amp; % by Location</CardTitle>
          <div className="mr-[3px] ml-[4px]">
            <CoastMap />
          </div>
          <div className="absolute top-[26px] right-[31px] flex flex-col gap-[18px]">
            <button type="button" aria-label="Zoom in" className="flex h-[27px] w-[27px] items-center justify-center rounded-full border border-[#222] bg-[#3c3c3c]">
              <svg viewBox="0 0 14 14" className="h-[14px] w-[14px]" stroke="#fff" strokeWidth="1.600">
                <path d="M7 0v14M0 7h14" />
              </svg>
            </button>
            <button type="button" aria-label="Zoom out" className="flex h-[27px] w-[27px] items-center justify-center rounded-full border border-[#222] bg-[#3c3c3c]">
              <svg viewBox="0 0 14 14" className="h-[14px] w-[14px]" stroke="#fff" strokeWidth="1.600">
                <path d="M0 7h14" />
              </svg>
            </button>
          </div>
          <div className="absolute bottom-[8px] left-[7px] h-[222px] w-[221px] border border-[#888] bg-[#e6e6e6] px-[4px] pt-[4px]">
            <table className="w-full table-fixed border-collapse bg-white font-['Open_Sans'] text-[12px] leading-[17px] text-[#252423]">
              <colgroup>
                <col className="w-[89px]" />
                <col className="w-[58px]" />
                <col className="w-[64px]" />
              </colgroup>
              <thead>
                <tr className="h-[30px] border-b border-[#118dff] bg-[#252423] text-left align-top text-[13px] leading-[21px] text-white">
                  <th scope="col" className="border-r border-[#777] px-[3px] font-normal">Location</th>
                  <th scope="col" className="border-r border-[#777] px-[3px] font-normal">Volume</th>
                  <th scope="col" className="px-[3px] font-normal">%</th>
                </tr>
              </thead>
              <tbody>
                {LOCATIONS.map(([n, v, p]) => (
                  <tr key={n} className="h-[18px] border-b border-[#e0e0e0]">
                    <td className="border-r border-[#dcdcdc] px-[3px] whitespace-nowrap">{n}</td>
                    <td className="border-r border-[#dcdcdc] px-[3px] text-right">{v}</td>
                    <td className="px-[3px] text-right">{p}</td>
                  </tr>
                ))}
              </tbody>
            </table>
          </div>
        </div>

        <div className="flex h-[504px] w-[127px] shrink-0 flex-col bg-[#052f57]">
          <h3 className="h-[29px] bg-[#fca311] pt-[3px] text-center font-[Roboto] text-[10px] leading-[12px] font-bold whitespace-nowrap text-white">
            Select Criteria to See
            <br />
            Hourly &amp; Weekly Utilisation
          </h3>
          <div className="flex flex-1 flex-col gap-[3px] px-4 pt-[2px] pb-[3px]">
            {CRITERIA.map((c) => (
              <button
                key={c[0]}
                type="button"
                className={
                  "flex-1 border border-[#e3a33a] font-['Open_Sans'] text-[9px] leading-[13px] font-bold whitespace-nowrap " +
                  (c[0] === "Access Hours" ? "bg-[#c0c0c0] text-black" : "bg-white text-[#052f57]")
                }
              >
                {c[0]}
                {c[1] && (
                  <>
                    <br />
                    {c[1]}
                  </>
                )}
              </button>
            ))}
          </div>
        </div>

        <div className="flex w-[438px] shrink-0 flex-col gap-[3px]">
          <div className="h-[47px] bg-[#052f57]">
            <h3 className="h-[17px] bg-[#fca311] text-center font-[Roboto] text-[11px] leading-[16px] font-bold text-white">KPI Type</h3>
            <div className="grid grid-cols-2 gap-[2px] px-[18px] pt-[2px]">
              {["Absolute", "Percentage"].map((t) => (
                <button key={t} type="button" className="h-[25px] border border-[#e3a33a] bg-white font-['Open_Sans'] text-[11px] font-bold text-[#052f57]">
                  {t}
                </button>
              ))}
            </div>
          </div>
          <div className="flex h-[224px] flex-col bg-white">
            <CardTitle className="h-[21px]">Usage by Hours (24 Hr Format) : in %</CardTitle>
            <div className="px-[4px]">
              <HeatTable
                head={["Access Hours", "8", "9", "10", "11", "12", "13", "14", "15", "16", "1"]}
                rows={HOURS}
                total={["6.26", "8.41", "8.96", "8.96", "5.21", "7.91", "9.11", "7.01", "7.21", ""]}
                cols={["w-[139px]", "w-[31px]", "w-[29px]", "w-[34px]", "w-[30px]", "w-[31px]", "w-[32px]", "w-[34px]", "w-[30px]", "w-[30px]", "w-[10px]"]}
                cellPad="pr-[5px]"
              />
            </div>
            <div className="mt-auto mb-[4px] ml-[4px] h-[6px] w-[304px] rounded-full bg-[#adadad]" />
          </div>
          <div className="flex h-[229px] flex-col bg-white">
            <CardTitle className="h-[20px]">Usage by Days : in %</CardTitle>
            <div className="flex pr-[5px] pl-[4px]">
              <div className="min-w-0 flex-1">
                <HeatTable
                  head={["Hours (24 Hr)", "Monday", "Tuesday", "Wednesday", "Thursday", "Friday", "Saturday", "S"]}
                  rows={DAYS}
                  total={["13.2", "14.5", "15.1", "13.9", "14.4", "13.9", ""]}
                  cols={["w-[83px]", "w-[53px]", "w-[52px]", "w-[72px]", "w-[58px]", "w-[42px]", "w-[55px]", "w-[8px]"]}
                  cellPad="pr-[4px]"
                />
              </div>
              <div className="mt-[1px] h-[133px] w-[6px] shrink-0 rounded-full bg-[#adadad]" />
            </div>
            <div className="mt-auto mb-[5px] ml-[4px] h-[6px] w-[374px] shrink-0 rounded-full bg-[#adadad]" />
          </div>
        </div>

        <Explanation className="-ml-[2px] w-[123px] shrink-0">
          <Lines className="gap-[13px] pt-[1px] pl-[4px] font-['Open_Sans'] text-[9px] leading-[14px]" blocks={EXPLAIN_2} />
        </Explanation>
      </div>
    </section>
  );
}

/* ---------- page 3 : revenue ---------- */

const POINTS: [number, number, number][] = [
  [0, 760, 12], [5, 615, 9], [10, 500, 10.5], [15, 560, 9], [14, 222, 3], [19, 180, 5],
  [24, 195, 4.5], [23, 32, 2.5], [25, 30, 10], [29, 30, 7.5], [32, 30, 7.5], [36, 28, 7],
];

function Scatter() {
  const X = (v: number) => 46 + v * 8.98;
  const Y = (v: number) => 184 - v * 0.2206;
  return (
    <svg viewBox="0 0 416 220" className="h-[219px] w-full bg-[#f3f3f3]" fontFamily="Open Sans" fontSize="10">
      <clipPath id="plot">
        <rect x="46" y="6" width="362" height="179" />
      </clipPath>
      <g stroke="#d2d2d2" strokeDasharray="1 3">
        {[0, 200, 400, 600, 800].map((v) => (
          <path key={v} d={`M46 ${Y(v)}H405`} />
        ))}
        {[0, 10, 20, 30, 40].map((v) => (
          <path key={v} d={`M${X(v)} 8V184`} />
        ))}
      </g>
      <g fill="#605e5c" textAnchor="end" fontSize="9">
        {[0, 200, 400, 600, 800].map((v) => (
          <text key={v} x="38" y={Y(v) + 3}>
            {v}
          </text>
        ))}
      </g>
      <g fill={NAVY} textAnchor="middle" fontWeight="600" fontSize="9">
        {[0, 10, 20, 30, 40].map((v) => (
          <text key={v} x={X(v)} y="197">
            {v}
          </text>
        ))}
      </g>
      <text x="225" y="212" textAnchor="middle" fill="#333" fontSize="11">
        Discount Rate
      </text>
      <text transform="translate(15 97) rotate(-90)" textAnchor="middle" fill="#333" fontSize="11">
        Average Revenue
      </text>
      <g clipPath="url(#plot)" fill="#fca311" fillOpacity="0.900">
        {POINTS.map(([a, b, r], i) => (
          <circle key={i} cx={X(a)} cy={Y(b)} r={r} />
        ))}
      </g>
    </svg>
  );
}

const EXPLAIN_3 = [
  [
    ">>Factors : Contribute **Highest Avg**", "**Revenue & Avg Final Price:**", "> **Premium** Membership", ">**All hours + Priority** Access", "> **Monthly Payment** type",
    "> **No Discount**", "> **Gender more or less same**, but", "**Females** have **highest** of all", "> **Low Price Sensitive** (based on Final", "Price & Subscription price).",
    ">>Highest **No. of Customers:**", "> **Premium** Membership", "> **All hours** has most customers", ">rest all same as above", ">>Can see in **Scatterplot** Higher",
    "discounts **not necessarily** implies", "**high Avg Revenue**. Two possibilities", ">>> Either **Discounts** are **poorly**", "**targeted**", ">>> Or **Price Sensitivity** is not the",
    "issue means price are competitive.", ">>**As per the Retention Strategy:**", ">>> **Likely churn already**, they", "**contribute high** to **revenue,**", "probably wining them back on basis",
    "of Extra Initiatives as per Preference", ">>>**High Risk**, are price sensitive as", "they **have highest discount rate**, to", "ensure they **stay use lucrative offers.**", ">>>**Low Risk**, doesn't seems price",
    "sensitive they can be **lured with extra**", "**activities offers**", ">>>**Lastly Customers are active**, but", "their **frequency of visits are low**", "**proactive contact** required.",
  ],
];

const PROFIT: { cell: string; rec: React.ReactNode; c: string[]; h: string }[] = [
  { cell: "bg-[#fc8f92]", rec: <><NoEntry />Likely Already<br />Churn, Special win<br />back offers based on<br />their Preference</>, c: ["160", "783.03", "14.14"], h: "h-[69px]" },
  { cell: SAND_CELL, rec: <>▽ Low Value (In<br />terms of<br />Engagement &amp;<br />Frequency)</>, c: ["430", "484.27", "13.51"], h: "h-[69px]" },
  { cell: PINK_CELL, rec: <><Warning />At Risk, Win Back<br />Offers</>, c: ["51", "447.35", "13.47"], h: "h-[35px]" },
  { cell: GREEN_CELL, rec: <><Crown />Loyalist Group,<br />VIP Rewards<br />Initiatives</>, c: ["70", "175.75", "14.60"], h: "h-[52px]" },
];

function RevenuePage() {
  return (
    <section className="mr-[5px] ml-[4px] border-r-2 border-b-2 border-l-2 border-dotted border-[#555] bg-[#e5e5e5]">
      <Header active={2} filters className="pt-[10px] pr-[8px] pb-[8px]" logoClass="w-[111px] pl-[12px]" />
      <KpiRow className="mt-[4px] mr-[4px] ml-[2px]" toolbar />
      <div className="mt-[8px] flex h-[518px] gap-[2px] pr-[2px] pl-[4px]">
        <div className="flex min-w-0 flex-1 flex-col gap-[6px]">
          <div className="h-[240px] border border-[#14213d] bg-[#14213d]">
            <h2 className="h-[24px] bg-[#fca311] text-center font-[Roboto] text-[17px] leading-[22px] font-bold text-white">Membership Details</h2>
            <div className="mt-[3px] grid grid-cols-2 gap-[8px] px-[3px]">
              <div className="h-[206px] bg-[#e5e5e5]">
                <CardTitle className="h-[22px]">Membership</CardTitle>
                <Legend className="pl-[6px]" items={[["Basic", "bg-[#fca311]"], ["Elite", "bg-[#14213d]"], ["Premium", "bg-white"], ["Standard", "bg-[#00a8e8]"]]} />
                <svg viewBox="0 24 265 160" className="h-[160px] w-full" fontFamily="Open Sans" fontSize="11" fontWeight="600" fill="#605e5c">
                  <Donut cx={133} cy={101} r={59} inner={35} parts={[[19.72, ORANGE], [9.96, NAVY], [40.64, WHITE], [29.68, BLUE]]} />
                  <path d="M152 43l2-6h9M193 90l5-1h9M133 161v7h9M94 41h8l4 6" fill="none" stroke="#aaa" />
                  <text x="166" y="41">394 (19.72%)</text>
                  <text x="211" y="87">199</text>
                  <text x="211" y="101">(9.96%)</text>
                  <text x="145" y="172">812 (40.64%)</text>
                  <text x="90" y="38" textAnchor="end">593</text>
                  <text x="90" y="52" textAnchor="end">(29.68%)</text>
                </svg>
              </div>
              <div className="h-[206px] bg-[#e5e5e5]">
                <CardTitle className="h-[22px]">Access Hours</CardTitle>
                <LabelBars
                  className="h-[184px]" w={265} h={184} x={107} top={21} pitch={38} bar={29} scale={0.158} color={BLUE} insideFill="#0095d0"
                  rows={[["All hours", 812], ["All hours + Priority...", 199], ["Off-peak only", 394], ["Weekdays only", 593]]}
                />
              </div>
            </div>
          </div>
          <div className="h-[272px] border border-[#14213d] bg-[#14213d]">
            <h2 className="h-[24px] bg-[#fca311] text-center font-[Roboto] text-[17px] leading-[22px] font-bold text-white">Payment &amp; Customer Details</h2>
            <div className="mt-[3px] grid grid-cols-2 gap-[8px] px-[3px]">
              <div className="flex flex-col gap-[3px]">
                <div className="h-[113px] bg-[#e5e5e5]">
                  <CardTitle className="h-[22px]">Payment Frequency</CardTitle>
                  <LabelBars
                    className="h-[91px]" w={265} h={91} x={91} top={15} pitch={22.5} bar={17} scale={0.1265} color={NAVY} insideFill={NAVY} axis="Payment Frequency"
                    rows={[["Early Bird (...", 624], ["Monthly", 1187], ["Quarterly", 187]]}
                  />
                </div>
                <div className="h-[123px] bg-[#e5e5e5]">
                  <CardTitle className="h-[22px]">Discount Type</CardTitle>
                  <LabelBars
                    className="h-[101px]" w={265} h={101} x={82} top={14} pitch={19.7} bar={16} scale={0.184} color={ORANGE} insideFill="#e0921a" axis="discount_type"
                    rows={[["Loyalty", 384], ["No Discount", 840], ["Promo", 389], ["Student", 385]]}
                  />
                </div>
              </div>
              <div className="h-[239px] bg-[#e5e5e5]">
                <CardTitle className="h-[22px]">Price Sensitive</CardTitle>
                <Legend className="pl-[6px]" items={[["High Price Se...", "bg-[#00a8e8]"], ["Low Price S...", "bg-white"], ["Medium ...", "bg-[#14213d]"]]} />
                <svg viewBox="0 24 265 193" className="h-[193px] w-full" fontFamily="Open Sans" fontSize="11" fontWeight="600" fill="#605e5c">
                  <Donut cx={133} cy={117} r={68} inner={41} parts={[[11.31, BLUE], [36.59, WHITE], [52.1, NAVY]]} />
                  <path d="M145 48l2-7h9M178 170l5 6h8M90 171l-5 5h-9" fill="none" stroke="#aaa" />
                  <text x="159" y="46">0K (11.31%)</text>
                  <text x="195" y="174">1K</text>
                  <text x="195" y="188">(36.59%)</text>
                  <text x="72" y="175" textAnchor="end">1K</text>
                  <text x="72" y="189" textAnchor="end">(52.1%)</text>
                </svg>
              </div>
            </div>
          </div>
        </div>

        <div className="flex w-[108px] shrink-0 flex-col border border-[#9a9a9a] bg-[#052f57]">
          <h3 className="h-[16px] bg-[#fca311] text-center font-[Roboto] text-[11px] leading-[16px] font-bold text-white">KPI Type</h3>
          <div className="flex flex-1 flex-col gap-[3px] px-[17px] pt-[2px] pb-[2px]">
            {["Avg|Revenue", "Avg Final|Price", "Customer|Vol", "Total|Revenue"].map((t, i) => (
              <button
                key={t}
                type="button"
                className={
                  "flex-1 border border-[#fca311] font-['Open_Sans'] text-[9px] leading-[12px] font-bold " +
                  (i === 0 ? "bg-[#1f1f1f] text-[#c8c8c8]" : "bg-white text-[#052f57]")
                }
              >
                {t.split("|")[0]}
                <br />
                {t.split("|")[1]}
              </button>
            ))}
          </div>
        </div>

        <div className="flex w-[417px] shrink-0 flex-col gap-[3px]">
          <div className="h-[242px] border border-[#555]">
            <CardTitle className="h-[21px]">Average Revenue and Sum of cnt by Discount Rate</CardTitle>
            <Scatter />
          </div>
          <div className="h-[267px] overflow-hidden bg-white">
            <CardTitle className="h-[21px]">Retention Recommendation V/S Profitability</CardTitle>
            <div className="flex h-[246px] justify-between pr-[4px] pl-[6px]">
              <div className="w-[380px] overflow-hidden">
                <table className="w-full table-fixed border-collapse font-['Open_Sans'] text-[12px] leading-[17px] whitespace-nowrap text-[#252423]">
                  <colgroup>
                    <col className="w-[125px]" />
                    <col className="w-[74px]" />
                    <col className="w-[87px]" />
                    <col className="w-[94px]" />
                  </colgroup>
                  <thead>
                    <tr className="h-[27px] border-b border-[#118dff] bg-[#252423] text-left align-top text-[12px] leading-[20px] text-white">
                      {["Recommendation", "Customers", "Avg Revenue", "Discount Rate"].map((h) => (
                        <th key={h} scope="col" className="border-r border-[#777] px-[4px] font-normal">
                          {h}
                        </th>
                      ))}
                    </tr>
                  </thead>
                  <tbody>
                    {PROFIT.map((r, i) => (
                      <tr key={i} className={"border-b border-[#dcdcdc] align-top " + r.h}>
                        <td className={"px-[4px] " + r.cell}>{r.rec}</td>
                        {r.c.map((v, j) => (
                          <td key={j} className="border-r border-[#dcdcdc] px-[4px] pt-px text-right">
                            {v}
                          </td>
                        ))}
                      </tr>
                    ))}
                  </tbody>
                </table>
              </div>
              <div className="mt-[2px] h-[171px] w-[6px] rounded-full bg-[#a6a6a6]" />
            </div>
          </div>
        </div>

        <Explanation className="h-[516px] w-[173px] shrink-0">
          <Lines className="pt-[1px] pl-[4px] font-['Open_Sans'] text-[9px] leading-[14px]" blocks={EXPLAIN_3} />
        </Explanation>
      </div>
    </section>
  );
}

export default function App() {
  return (
    <main className="bg-white pb-[3px] font-['Open_Sans',sans-serif]">
      <RetentionPage />
      <ResourcePage />
      <div className="h-[2px] bg-[#14161d]" />
      <RevenuePage />
    </main>
  );
}
